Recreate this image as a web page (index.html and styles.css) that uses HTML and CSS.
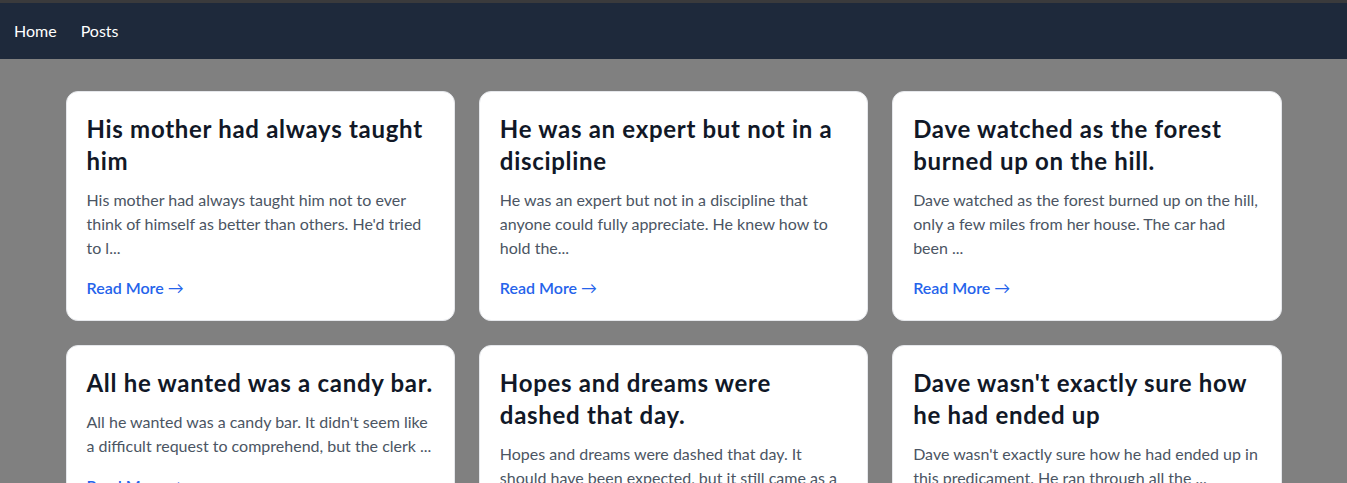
FILE: index.html
```html
<!DOCTYPE html>
<html lang="en">
<head>
<meta charset="utf-8">
<title>Posts</title>
<link rel="stylesheet" href="styles.css">
</head>
<body>
<nav class="navbar">
  <a class="nav-link" href="#">Home</a>
  <a class="nav-link" href="#">Posts</a>
</nav>
<main class="container">
  <div class="grid">
    <article class="card">
      <h2 class="card-title">His mother had always taught him</h2>
      <p class="card-text">His mother had always taught him not to ever think of himself as better than others. He'd tried to l...</p>
      <a class="read-more" href="#">Read More <span class="arrow">→</span></a>
    </article>
    <article class="card">
      <h2 class="card-title">He was an expert but not in a discipline</h2>
      <p class="card-text">He was an expert but not in a discipline that anyone could fully appreciate. He knew how to hold the...</p>
      <a class="read-more" href="#">Read More <span class="arrow">→</span></a>
    </article>
    <article class="card">
      <h2 class="card-title">Dave watched as the forest burned up on the hill.</h2>
      <p class="card-text">Dave watched as the forest burned up on the hill, only a few miles from her house. The car had been ...</p>
      <a class="read-more" href="#">Read More <span class="arrow">→</span></a>
    </article>
    <article class="card">
      <h2 class="card-title">All he wanted was a candy bar.</h2>
      <p class="card-text">All he wanted was a candy bar. It didn't seem like a difficult request to comprehend, but the clerk ...</p>
      <a class="read-more" href="#">Read More <span class="arrow">→</span></a>
    </article>
    <article class="card">
      <h2 class="card-title">Hopes and dreams were dashed that day.</h2>
      <p class="card-text">Hopes and dreams were dashed that day. It should have been expected, but it still came as a ...</p>
      <a class="read-more" href="#">Read More <span class="arrow">→</span></a>
    </article>
    <article class="card">
      <h2 class="card-title">Dave wasn't exactly sure how he had ended up</h2>
      <p class="card-text">Dave wasn't exactly sure how he had ended up in this predicament. He ran through all the ...</p>
      <a class="read-more" href="#">Read More <span class="arrow">→</span></a>
    </article>
  </div>
</main>
</body>
</html>
```

FILE: styles.css
```css
* {
  box-sizing: border-box;
}

html, body {
  margin: 0;
  padding: 0;
  overflow: hidden;
}

body {
  background: #808080;
  font-family: "Lato", "Segoe UI", "Noto Sans", sans-serif;
  font-size: 16px;
  line-height: 24px;
}

.navbar {
  display: flex;
  align-items: center;
  gap: 24px;
  height: 59px;
  padding: 0 14px;
  background: #1e293b;
  border-top: 3px solid #3a3a3c;
}

.nav-link {
  color: #ffffff;
  text-decoration: none;
  font-size: 16px;
}

.container {
  max-width: 1280px;
  margin: 0 auto;
  padding: 32px 32px;
}

.grid {
  display: grid;
  grid-template-columns: repeat(3, 1fr);
  gap: 24px;
}

.card {
  background: #ffffff;
  border: 1px solid #e5e7eb;
  border-radius: 12px;
  padding: 20px;
  display: flex;
  flex-direction: column;
  align-items: flex-start;
}

.card-title {
  margin: 0 0 12px;
  padding-top: 1px;
  font-size: 24px;
  line-height: 32px;
  font-weight: 700;
  letter-spacing: 0.7px;
  color: #111827;
}

.card-text {
  margin: -1px 0 16px;
  color: #4b5563;
  font-size: 16px;
  line-height: 24px;
}

.read-more {
  color: #2563eb;
  font-weight: 600;
  text-decoration: none;
}

.arrow {
  font-weight: 400;
}
```
